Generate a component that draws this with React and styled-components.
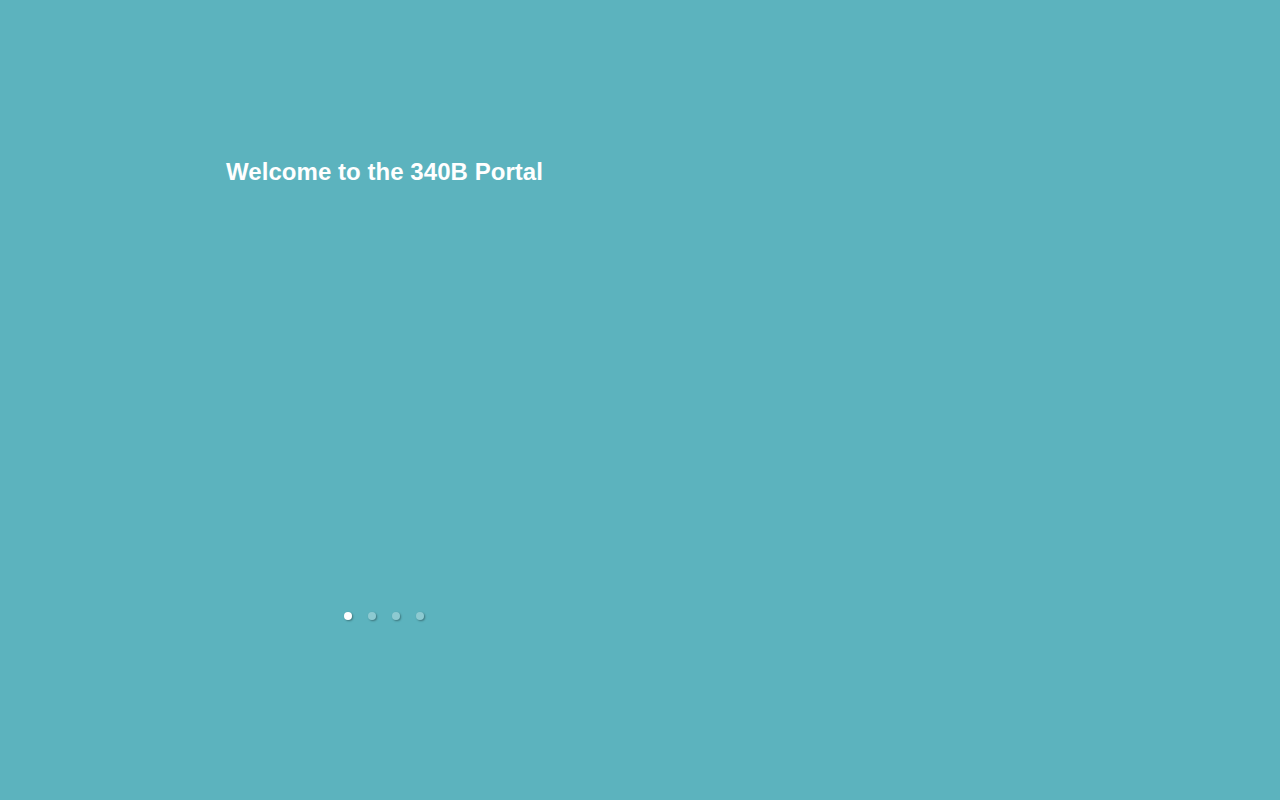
import styled, { createGlobalStyle } from "styled-components";

const GlobalStyle = createGlobalStyle`
  html, body {
    margin: 0;
    padding: 0;
    background-color: #5cb3be;
  }
  body {
    font-family: "Liberation Sans", Arial, sans-serif;
  }
`;

export default function App() {
  const slides = [0, 1, 2, 3];
  return (
    <>
      <GlobalStyle />
      <Page>
        <Carousel>
          <Title>Welcome to the 340B Portal</Title>
          <Dots>
            {slides.map((i) => (
              <Dot key={i} active={i === 0} />
            ))}
          </Dots>
        </Carousel>
      </Page>
    </>
  );
}

const Page = styled.div`
  width: 100vw;
  height: 100vh;
  background-color: #5cb3be;
  padding-top: 157px;
  padding-left: 226px;
  box-sizing: border-box;
`;

const Carousel = styled.div`
  width: 316px;
  height: 463px;
  display: flex;
  flex-direction: column;
  justify-content: space-between;
`;

const Title = styled.h1`
  margin: 0;
  color: #ffffff;
  font-size: 24px;
  line-height: 30px;
  font-weight: bold;
  letter-spacing: 0.05px;
  white-space: nowrap;
`;

const Dots = styled.div`
  display: flex;
  justify-content: center;
  gap: 16px;
`;

const Dot = styled.span`
  width: 8px;
  height: 8px;
  border-radius: 50%;
  background-color: ${(p) => (p.active ? "#ffffff" : "rgba(255, 255, 255, 0.3)")};
  box-shadow: 1px 1px 2px rgba(0, 0, 0, 0.35);
`;
